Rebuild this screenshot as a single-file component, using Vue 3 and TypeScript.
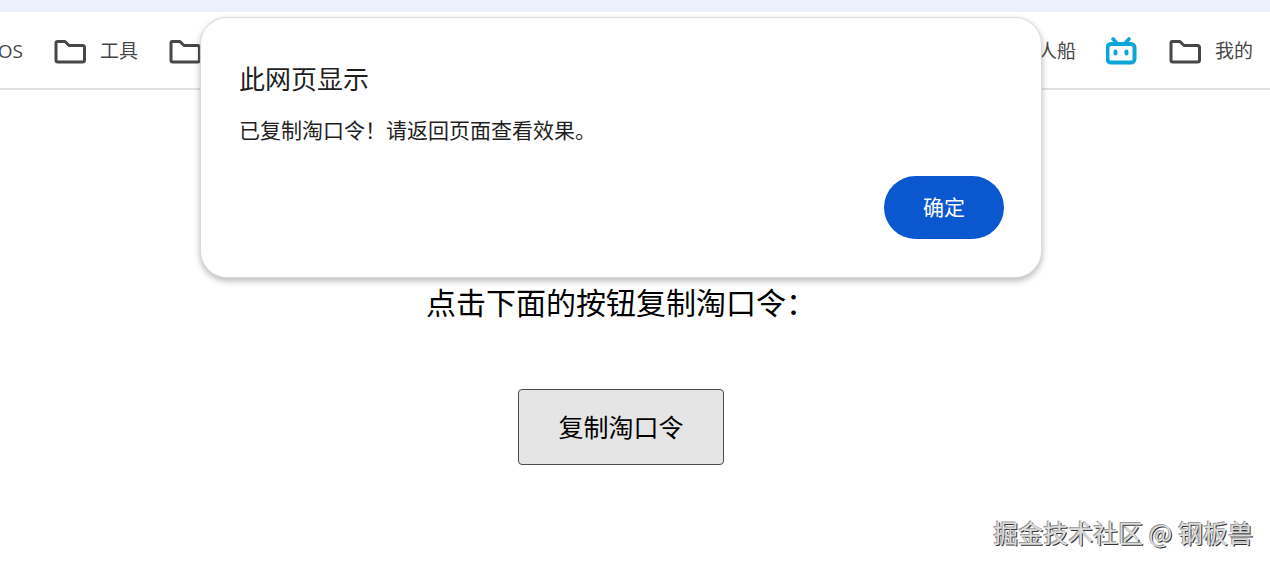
<script setup lang="ts">
import { ref } from 'vue'

interface Bookmark {
  label: string
  icon: 'folder' | 'bili' | 'none'
}

const leading: Bookmark[] = [
  { label: 'OS', icon: 'none' },
  { label: '工具', icon: 'folder' },
  { label: '', icon: 'folder' },
]
const trailing: Bookmark[] = [
  { label: '人船', icon: 'none' },
  { label: '', icon: 'bili' },
  { label: '我的', icon: 'folder' },
]
const groups = [leading, trailing]

const open = ref(true)
</script>

<template>
  <div class="browser">
    <div class="tabs"></div>
    <nav class="bookmarks" aria-label="书签">
      <div v-for="(group, g) in groups" :key="g" class="group">
        <a v-for="(item, i) in group" :key="i" class="bookmark" href="#">
          <svg v-if="item.icon === 'folder'" width="34" height="26" viewBox="0 0 34 26" aria-hidden="true">
            <path
              d="M4.500 3.500H12L16 7.500H29.500Q31.500 7.500 31.500 9.500V22Q31.500 24 29.500 24H5Q3 24 3 22V5Q3 3.500 4.500 3.500Z"
              fill="none" stroke="#474747" stroke-width="3" stroke-linejoin="round"
            />
          </svg>
          <svg v-else-if="item.icon === 'bili'" width="32" height="28" viewBox="0 0 32 28" aria-hidden="true">
            <g fill="none" stroke="#0ba5d8" stroke-linecap="round">
              <path d="M7 2L11 6.500M23 2L19 6.500" stroke-width="3.600" />
              <rect x="1.500" y="7" width="27" height="18.500" rx="3.500" stroke-width="4" />
              <path d="M9.500 14.500V16.500M20.500 14.500V16.500" stroke-width="4" />
            </g>
          </svg>
          <span v-if="item.label">{{ item.label }}</span>
        </a>
      </div>
    </nav>

    <main class="page">
      <p class="hint">点击下面的按钮复制淘口令：</p>
      <button class="copy" type="button" @click="open = true">复制淘口令</button>
    </main>

    <div v-if="open" class="overlay">
      <section class="dialog" role="alertdialog" aria-labelledby="dlg-title" aria-describedby="dlg-text">
        <h1 id="dlg-title">此网页显示</h1>
        <p id="dlg-text">已复制淘口令！请返回页面查看效果。</p>
        <button class="confirm" type="button" @click="open = false">确定</button>
      </section>
    </div>

    <div class="watermark">掘金技术社区 @ 钢板兽</div>
  </div>
</template>

<style>
body {
  margin: 0;
  background: #fff;
}
</style>

<style scoped>
.browser {
  position: relative;
  min-height: 100vh;
  overflow: hidden;
  background: #fff;
  color: #000;
  font-family: "Open Sans", "Noto Sans CJK SC", sans-serif;
}

.tabs {
  height: 12px;
  background: #ebf0fa;
}

.bookmarks {
  display: flex;
  justify-content: space-between;
  height: 76px;
  border-bottom: 2px solid #e0e0e0;
}

.group {
  display: flex;
  align-items: center;
  justify-content: flex-end;
  gap: 30px;
  padding-top: 1px;
  overflow: hidden;
}

.group:first-child {
  width: 202px;
}

.group:last-child {
  padding-right: 17px;
}

.bookmark {
  display: flex;
  flex: none;
  align-items: center;
  gap: 13px;
  color: #474747;
  font-size: 19px;
  line-height: 28px;
  text-decoration: none;
}

.page {
  display: flex;
  flex-direction: column;
  align-items: center;
  gap: 68px;
  padding: 191px 28px 0 0;
}

.hint {
  margin: 0;
  font-family: "Noto Sans CJK SC", sans-serif;
  font-size: 30px;
  line-height: 40px;
}

.copy {
  padding: 17px 39px 19px;
  border: 1px solid #4c4c4c;
  border-radius: 4px;
  background: #e5e5e5;
  color: #000;
  font-family: "Noto Sans CJK SC", sans-serif;
  font-size: 25px;
  line-height: 38px;
}

.overlay {
  position: absolute;
  top: 18px;
  left: 0;
  right: 28px;
  display: flex;
  justify-content: center;
}

.dialog {
  box-sizing: border-box;
  display: flex;
  flex-direction: column;
  width: 840px;
  max-width: 100%;
  padding: 43px 37px 38px 38px;
  border-radius: 26px;
  background: #fff;
  box-shadow: 0 0 1px 1px #dcdcdc, 0 3px 6px 1px rgba(0, 0, 0, 0.28);
  color: #1f1f1f;
  font-family: "Noto Sans CJK SC", sans-serif;
}

.dialog h1 {
  margin: 0 0 19px;
  font-size: 26px;
  font-weight: 400;
  line-height: 34px;
}

.dialog p {
  margin: 0 0 32px;
  font-size: 21px;
  line-height: 30px;
}

.confirm {
  align-self: flex-end;
  padding: 15px 39px 17px;
  border: 0;
  border-radius: 32px;
  background: #0b57d0;
  color: #fff;
  font-family: inherit;
  font-size: 21px;
  line-height: 31px;
}

.watermark {
  position: absolute;
  right: 17px;
  bottom: 13px;
  color: #dcdcdc;
  font-family: "Noto Sans CJK SC", sans-serif;
  font-size: 25px;
  line-height: 38px;
  text-shadow: -1px -1px 0 #999, 1px 1px 0 #333;
}
</style>
